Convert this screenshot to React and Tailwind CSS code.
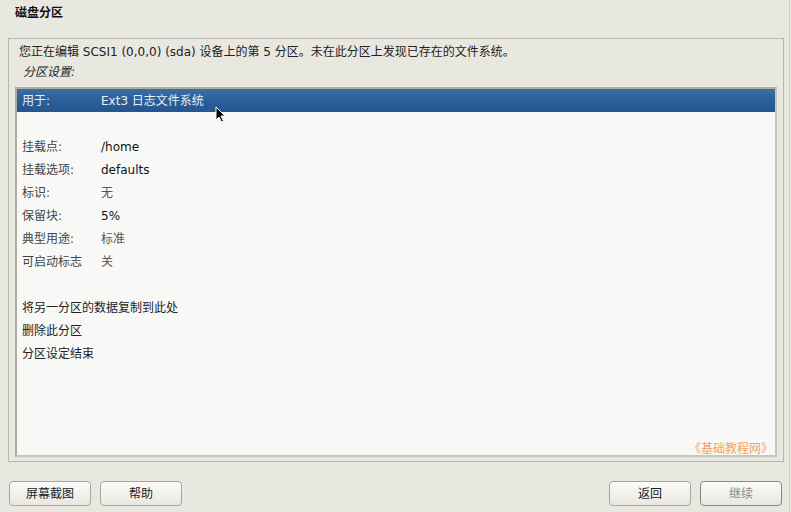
import React from 'react';

const rows = [
  { label: '挂载点:', value: '/home', dark: true },
  { label: '挂载选项:', value: 'defaults', dark: true },
  { label: '标识:', value: '无' },
  { label: '保留块:', value: '5%', dark: true },
  { label: '典型用途:', value: '标准' },
  { label: '可启动标志', value: '关' },
];

const actions = ['将另一分区的数据复制到此处', '删除此分区', '分区设定结束'];

const Button = ({ children, disabled }) => (
  <button
    className={`w-[82px] h-[25px] rounded-[4px] border text-[12px] bg-gradient-to-b from-[#fbfbf9] to-[#e9e7e0] ${
      disabled ? 'border-[#8a877f] text-[#8c8c8c]' : 'border-[#a9a59a] text-[#222]'
    }`}
  >
    {children}
  </button>
);

const App = () => {
  return (
    <div
      className="w-[791px] h-[512px] bg-[#e8e7e0] flex flex-col text-[12px] text-[#222] relative overflow-hidden"
      style={{ fontFamily: '"DejaVu Sans", "Noto Sans CJK SC", sans-serif' }}
    >
      <div className="h-[38px] pl-[15px] pt-[3px] font-bold text-[12px] leading-[20px] text-[#111]">磁盘分区</div>

      <div className="ml-[8px] w-[776px] h-[424px] border border-[#bab6aa] flex flex-col px-[6px]">
        <div className="pl-[4px] pt-[3px] leading-[20px] text-[#222]">
          您正在编辑 SCSI1 (0,0,0) (sda) 设备上的第 5 分区。未在此分区上发现已存在的文件系统。
        </div>
        <div className="pl-[8px] leading-[20px] italic text-[#222]">分区设置:</div>
        <div className="mt-[5px] flex-1 mb-[4px] border-2 border-[#b0aca2] border-r-[#c8c5bb] border-b-[#c8c5bb] bg-[#f8f9f6] flex flex-col relative">
          <div className="h-[23px] bg-gradient-to-b from-[#3a6ea8] via-[#2a5f9a] to-[#245690] text-[#e8eef6] flex items-center">
            <span className="w-[84px] pl-[5px]">用于:</span>
            <span>Ext3 日志文件系统</span>
          </div>
          <div className="h-[23px]" />
          {rows.map((r) => (
            <div key={r.label} className="h-[23px] flex items-center">
              <span className="w-[84px] pl-[5px] text-[#444]">{r.label}</span>
              <span className={r.dark ? 'text-[#111]' : 'text-[#555]'}>{r.value}</span>
            </div>
          ))}
          <div className="h-[23px]" />
          {actions.map((a) => (
            <div key={a} className="h-[23px] flex items-center pl-[5px] text-[#222]">
              {a}
            </div>
          ))}
          <div className="flex-1" />
          <div className="flex justify-end pr-[2px] text-[#f5a25c] leading-[12px]">《基础教程网》</div>
        </div>
      </div>

      <div className="mt-[19px] flex items-center px-[9px]">
        <div className="flex gap-[9px]">
          <Button>屏幕截图</Button>
          <Button>帮助</Button>
        </div>
        <div className="flex-1" />
        <div className="flex gap-[9px]">
          <Button>返回</Button>
          <Button disabled>继续</Button>
        </div>
      </div>

      <div className="absolute right-[1px] top-0 bottom-0 w-px bg-[#d0cdc4]" />

      <svg className="absolute left-[215px] top-[106px]" width="11" height="17" viewBox="0 0 11 17">
        <path d="M1 1 L1 14 L4 11 L6.5 16 L8.5 15 L6 10 L10 10 Z" fill="#000" stroke="#fff" strokeWidth="1" />
      </svg>
    </div>
  );
};

export default App;
